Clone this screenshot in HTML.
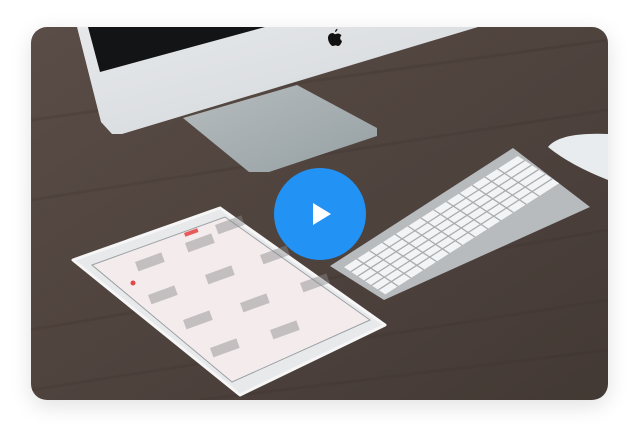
<!DOCTYPE html>
<html><head><style>
html,body{margin:0;padding:0;background:#fff;width:639px;height:435px;overflow:hidden}
.card{position:absolute;left:31px;top:27px;width:577px;height:373px;border-radius:16px;overflow:hidden;box-shadow:0 6px 22px rgba(0,0,0,.12)}
</style></head><body>
<div class="card">
<svg width="577" height="373" viewBox="31 27 577 373" xmlns="http://www.w3.org/2000/svg">
<defs>
<linearGradient id="wood" x1="0" y1="0" x2="1" y2="1">
<stop offset="0" stop-color="#5a4c46"/><stop offset=".5" stop-color="#4f433e"/><stop offset="1" stop-color="#433934"/>
</linearGradient>
<linearGradient id="mon" x1="0" y1="0" x2="1" y2="1">
<stop offset="0" stop-color="#e6e8ea"/><stop offset="1" stop-color="#d3d7da"/>
</linearGradient>
<linearGradient id="stand" x1="0" y1="0" x2="1" y2="1">
<stop offset="0" stop-color="#b7bcbe"/><stop offset="1" stop-color="#95a0a3"/>
</linearGradient>
</defs>
<rect x="31" y="27" width="577" height="373" fill="url(#wood)"/>
<g stroke="#3a302c" stroke-width="3" opacity=".2" fill="none">
<path d="M31 120 L608 40"/><path d="M31 200 L608 110"/><path d="M31 330 L608 230"/><path d="M31 390 L608 300"/><path d="M200 400 L608 350"/>
</g>
<!-- stand -->
<polygon points="183,118 297,85 377,128 377,136 269,172 249,172" fill="url(#stand)"/>
<!-- monitor -->
<polygon points="77,27 478,27 122,134 112,134 101,122" fill="url(#mon)"/>
<polygon points="88,27 265,27 100,72" fill="#121416"/>
<path d="M333 33 c-3 0 -5 2 -5 5 c0 4 3 8 5 8 c1 0 1.5-.6 2.5-.6 c1 0 1.5.6 2.5.6 c2 0 3.5-3 4-5 c-2-1 -2.5-4 -.5-5.5 c-1-1.5 -2.5-2 -3.5-2 c-1.5 0 -2 .7 -3 .7 z M335 32 c0-1.5 1-3 2.5-3.3 c0 1.5 -1 3 -2.5 3.3z" fill="#111"/>
<!-- mouse -->
<path d="M548 147 Q560 132 608 134 L608 180 Q570 165 548 147 Z" fill="#e9ecee"/>
<!-- keyboard -->
<polygon points="330,266 513,148 590,207 384,300" fill="#b7bbbe"/>
<g transform="matrix(183,-117,53,35,330,265)">
<rect x=".03" y=".16" width=".95" height=".78" fill="#f3f4f6"/>
<g stroke="#a9adb0" stroke-width="1.3" vector-effect="non-scaling-stroke" fill="none">
<path vector-effect="non-scaling-stroke" d="M.03 .29 H.98 M.03 .42 H.98 M.03 .55 H.98 M.03 .68 H.98 M.03 .81 H.98"/>
<path vector-effect="non-scaling-stroke" d="M.1 .16 V.94 M.17 .16 V.94 M.24 .16 V.94 M.31 .16 V.94 M.38 .16 V.94 M.45 .16 V.94 M.52 .16 V.94 M.59 .16 V.94 M.66 .16 V.94 M.73 .16 V.94 M.80 .16 V.94 M.87 .16 V.94"/>
</g>
</g>
<!-- ipad -->
<polygon points="73,260 220,208 385,325 240,395" fill="#e8e9eb" stroke="#f6f6f7" stroke-width="3" stroke-linejoin="round"/>
<polygon points="92,265 225,217 370,320 232,382" fill="#f4ecec" stroke="#9aa0a4" stroke-width="1"/>
<g fill="#8a8a8c" opacity=".45">
<rect x="135" y="262" width="28" height="10" transform="rotate(-20 135 262)"/>
<rect x="185" y="243" width="28" height="10" transform="rotate(-20 185 243)"/>
<rect x="148" y="295" width="28" height="10" transform="rotate(-20 148 295)"/>
<rect x="205" y="275" width="28" height="10" transform="rotate(-20 205 275)"/>
<rect x="260" y="255" width="28" height="10" transform="rotate(-20 260 255)"/>
<rect x="183" y="320" width="28" height="10" transform="rotate(-20 183 320)"/>
<rect x="240" y="303" width="28" height="10" transform="rotate(-20 240 303)"/>
<rect x="300" y="283" width="28" height="10" transform="rotate(-20 300 283)"/>
<rect x="210" y="348" width="28" height="10" transform="rotate(-20 210 348)"/>
<rect x="270" y="330" width="28" height="10" transform="rotate(-20 270 330)"/>
<rect x="215" y="225" width="28" height="10" transform="rotate(-20 215 225)"/>
</g>
<rect x="184" y="233" width="14" height="4" fill="#e85a5a" transform="rotate(-20 184 233)"/>
<circle cx="133" cy="283" r="2.5" fill="#e04848"/>
<!-- play -->
<circle cx="320" cy="214" r="46" fill="#2292f5"/>
<polygon points="313,203 313,225 331,214" fill="#fff"/>
</svg>
</div>
</body></html>
